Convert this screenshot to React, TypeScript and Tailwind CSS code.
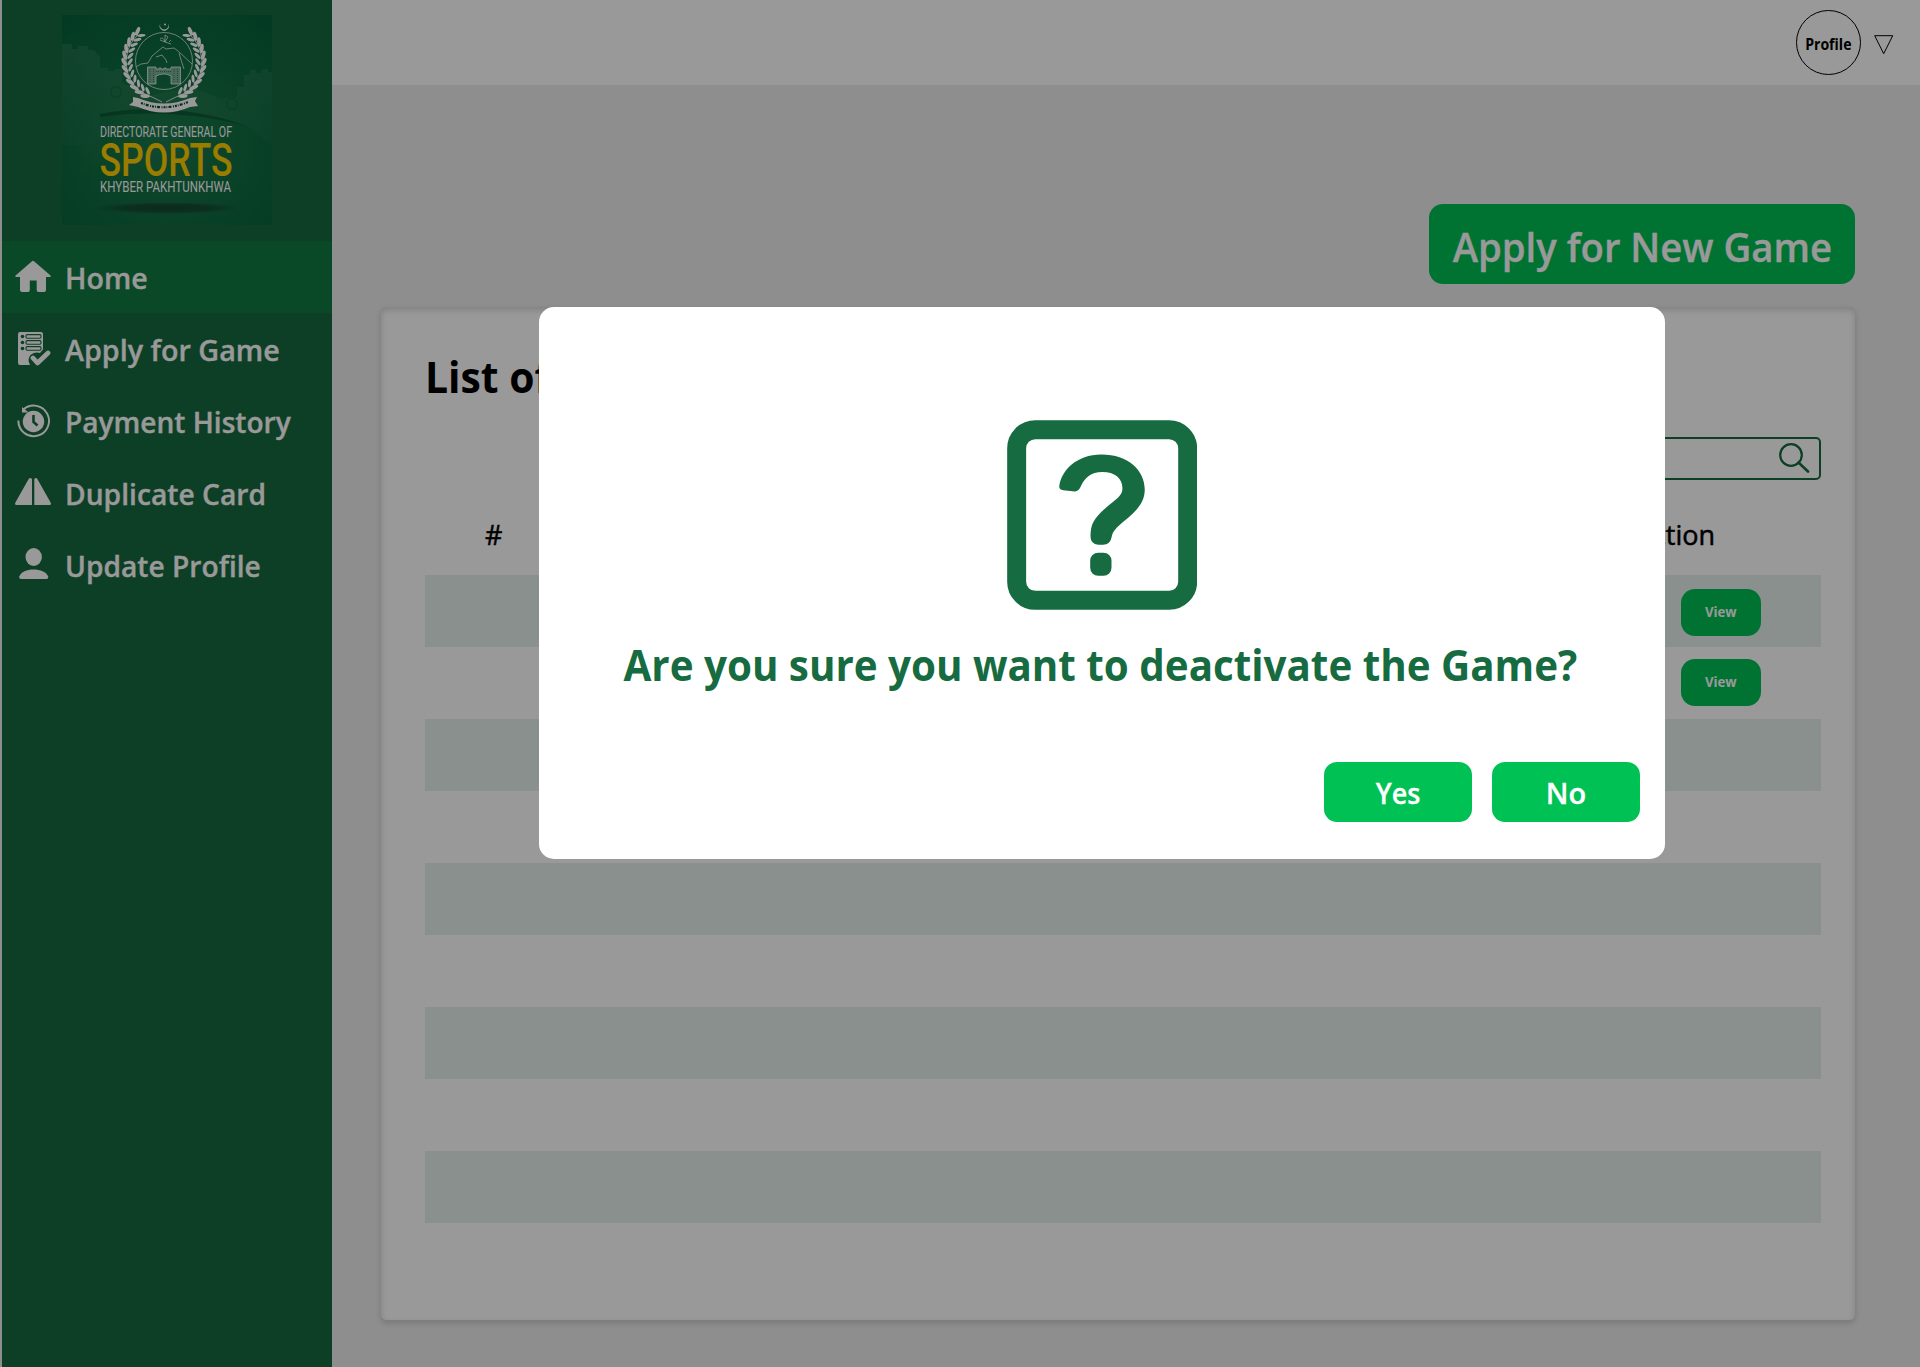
import React from "react";

const leafAngles = [-47, -37, -27, -17, -7, 3, 13, 23, 33, 43, 53, 63];

function Branch() {
  return (
    <g>
      {leafAngles.map((a) => (
        <g key={a} transform={`rotate(${a})`}>
          <ellipse cx="34" cy="-1" rx="1.500" ry="4" transform="rotate(-38 34 -1)" />
          <ellipse cx="39.800" cy="-1" rx="1.900" ry="4.700" transform="rotate(24 39.800 -1)" />
        </g>
      ))}
      <path d="M26 -26 A36.500 36.500 0 0 1 12 36 L2 41" fill="none" stroke="#fff" strokeWidth="0.8" />
    </g>
  );
}

function Logo() {
  return (
    <svg className="h-[210px] w-[210px]" viewBox="0 0 210 210">
      <defs>
        <radialGradient id="glow" cx="50%" cy="60%" r="75%">
          <stop offset="0" stopColor="#1b7a4c" />
          <stop offset="0.5" stopColor="#106e43" />
          <stop offset="1" stopColor="#04613a" />
        </radialGradient>
        <radialGradient id="shade">
          <stop offset="0" stopColor="#174230" stopOpacity="0.95" />
          <stop offset="0.6" stopColor="#174230" stopOpacity="0.7" />
          <stop offset="1" stopColor="#174230" stopOpacity="0" />
        </radialGradient>
        <linearGradient id="wall" x1="0" y1="0" x2="0" y2="1">
          <stop offset="0" stopColor="#5a9474" stopOpacity="0.28" />
          <stop offset="1" stopColor="#4f8a68" stopOpacity="0" />
        </linearGradient>
      </defs>
      <rect width="210" height="210" fill="url(#glow)" />
      <path d="M0 29 H10 V34 H16 V31 H26 V35 H32 L38 42 V53 H46 V56 H52 V54 H60 V68 L90 80 L130 72 L158 84 L175 82 V72 H182 V60 H188 V55 H194 V58 H200 V54 H206 V57 H210 V130 L185 111 Q110 85 38 99 V150 L18 165 V130 H0 Z" fill="url(#wall)" />
      <path d="M38 99 Q110 85 185 111 Q110 92 38 102 Z" fill="#0a5230" opacity="0.7" />
      <circle cx="54" cy="77" r="5.500" fill="none" stroke="#0d5732" opacity="0.6" />
      <circle cx="170" cy="89" r="5.500" fill="none" stroke="#0d5732" opacity="0.6" />
      <g fill="#fff">
        <path d="M98.500 8.500 A4.600 4.600 0 1 0 106 8.500 A4.200 4.200 0 1 1 98.500 8.500Z" />
        <circle cx="103" cy="9.500" r="1" />
        <g transform="translate(102 46)">
          <Branch />
          <g transform="scale(-1 1)">
            <Branch />
          </g>
        </g>
      </g>
      <g fill="none" stroke="#fff" strokeWidth="0.7">
        <circle cx="102" cy="46" r="28.500" />
        <path d="M74 52 L79 49 L86 48 L90 41 L101 32 L104 34 L112 33 L116 36 L130 49 M94 42 L100 40 L104 45 L105 48 M117 38 L120 48 L122 54" />
        <path d="M98 25 L103 27 L109 29 M103 27 L103 20 L106 22 L103 27 M98 24 Q101 21 103 27 M107 27 L109 25" />
      </g>
      <path d="M85.500 52 H94 V54 H97 V53 H99 V54 H102 V53 H104 V54 H109 V52 H118.500 V69 H109 V61 Q102 57 94 61 V69 H85.500Z" fill="#fff" fillOpacity="0.45" stroke="#fff" strokeWidth="0.7" />
      <path d="M94 56.500 H109 M88 54 V68 M91.500 54 V68 M112 54 V68 M115.500 54 V68" stroke="#14693f" strokeWidth="0.7" strokeDasharray="1 1" />
      <path d="M71 82 L76 83 Q102 94 128 83 L135 82 L133 86 L136 91 L128 92 Q102 103 76 92 L67 90 L71 87Z" fill="#fff" />
      <path d="M79 88 Q102 97 126 87" fill="none" stroke="#0c4a2c" strokeWidth="2.200" strokeDasharray="2 1 .8 1.200 3 1.500 1 1" />
      <g fill="#fff" fontFamily="Roboto, 'Liberation Sans', sans-serif">
        <text x="38" y="122" fontSize="14.200" textLength="132" lengthAdjust="spacingAndGlyphs">DIRECTORATE GENERAL OF</text>
        <text x="37.500" y="160.500" fontSize="46" fontWeight="500" fill="#ffcf00" textLength="133" lengthAdjust="spacingAndGlyphs">SPORTS</text>
        <text x="38" y="177" fontSize="15" textLength="131" lengthAdjust="spacingAndGlyphs">KHYBER PAKHTUNKHWA</text>
      </g>
      <ellipse cx="105" cy="193" rx="74" ry="6" fill="url(#shade)" />
    </svg>
  );
}

const HomeIcon = () => (
  <svg className="h-9 w-9" viewBox="0 0 36 36" fill="#fff">
    <path d="M17 2.200 Q18 1.300 19 2.200 L35.500 16.500 Q36.300 17.700 35 18 H31 V31 Q31 33 29 33 H23.500 Q21.700 33 21.700 31 V21.500 H14.800 V31 Q14.800 33 13 33 H7.200 Q5 33 5 31 V18 H1 Q-0.300 17.700 .6 16.500 Z" />
  </svg>
);

const ApplyIcon = () => (
  <svg className="h-9 w-9" viewBox="0 0 36 36">
    <path d="M5 1 H26 Q28 1 28 3 V18.500 L25 22 Q20 20.500 15.500 24 Q12 28 15 34 H5 Q3 34 3 32 V3 Q3 1 5 1Z" fill="#fff" />
    <g stroke="#176a40" strokeWidth="1.100" fill="#fff">
      <rect x="11" y="3.600" width="15" height="3.600" rx="1.200" />
      <rect x="11" y="9.600" width="15" height="3.600" rx="1.200" />
      <rect x="11" y="15.600" width="15" height="3.600" rx="1.200" />
    </g>
    <g fill="#176a40">
      <circle cx="7.500" cy="5.500" r="1.800" />
      <circle cx="7.500" cy="11.500" r="1.800" />
      <circle cx="7.500" cy="17.500" r="1.800" />
    </g>
    <path d="M18 26.500 L22.500 31 L33 21.500" fill="none" stroke="#176a40" strokeWidth="7" />
    <path d="M18 27 L22.500 32 L33 22" fill="none" stroke="#fff" strokeWidth="4.800" strokeLinecap="round" strokeLinejoin="round" />
  </svg>
);

const HistoryIcon = () => (
  <svg className="h-9 w-9" viewBox="0 0 36 36" fill="none">
    <circle cx="18.500" cy="18.500" r="10.700" fill="#fff" />
    <path d="M8.500 6.500 A15.300 15.300 0 1 1 3.400 17.500" stroke="#fff" strokeWidth="2" />
    <path d="M7 4 L13.500 9.500 H7Z" fill="#fff" />
    <path d="M18.500 12 V19 L22.500 22.500" stroke="#176a40" strokeWidth="2.600" />
  </svg>
);

const DuplicateIcon = () => (
  <svg className="h-9 w-9" viewBox="0 0 36 36" fill="#fff">
    <path d="M13.500 4.300 Q14.200 3 15.500 3 Q17 3 17 4.500 V30 H1 Q-.5 29.500 .4 27.500Z" />
    <path d="M22.500 4.300 Q21.800 3 20.500 3 Q19.300 3 19.300 4.500 V30 H35 Q36.500 29.500 35.600 27.500Z" />
  </svg>
);

const PersonIcon = () => (
  <svg className="h-9 w-9" viewBox="0 0 36 36" fill="#fff">
    <ellipse cx="18.700" cy="10" rx="8.200" ry="9" />
    <path d="M4.200 29.500 C6 25 12 22.500 18.500 22.500 C25 22.500 31.500 25 33.200 29.500 Q33.400 32 31.500 32 H6 Q4 32 4.200 29.500Z" />
  </svg>
);

const nav = [
  { label: "Home", icon: <HomeIcon />, active: true, scale: "scale-x-[0.985]" },
  { label: "Apply for Game", icon: <ApplyIcon />, scale: "scale-x-[0.99]" },
  { label: "Payment History", icon: <HistoryIcon />, scale: "scale-x-[0.968]" },
  { label: "Duplicate Card", icon: <DuplicateIcon />, scale: "scale-x-[0.973]" },
  { label: "Update Profile", icon: <PersonIcon />, scale: "scale-x-[0.971]" },
];

function Sidebar() {
  return (
    <aside className="ml-0.5 flex w-[330px] shrink-0 flex-col bg-[#176a40]">
      <div className="flex h-[241px] justify-center pt-[15px]">
        <Logo />
      </div>
      {nav.map((n) => (
        <div
          key={n.label}
          className={`flex h-[72px] items-center gap-[14px] pl-[13px] text-[29px] font-semibold text-white ${n.active ? "bg-[#127b43]" : ""}`}
        >
          {n.icon}
          <span className={`mt-0.5 origin-left whitespace-nowrap [-webkit-text-stroke:0.3px_#fff] ${n.scale}`}>{n.label}</span>
        </div>
      ))}
    </aside>
  );
}

const rows = [true, true, false, false, false, false, false, false, false];

function GamesCard() {
  return (
    <section className="mr-[65px] ml-[49px] mt-[23px] h-[1013px] rounded-[5px] bg-white pr-[34px] pl-[44px] shadow-[0_3px_6px_#00000029,inset_0_3px_6px_#00000029]">
      <h1 className="origin-left scale-x-[0.95] pt-[40px] text-[43px] leading-[60px] font-bold">List of Games</h1>
      <div className="mt-[30px] ml-auto flex h-[43px] w-[500px] items-center justify-end rounded-[5px] border-2 border-[#176a40] pr-[9px] pb-0.5">
        <svg className="h-8 w-8" viewBox="0 0 32 32" fill="none" stroke="#176a40">
          <circle cx="13" cy="13" r="10.800" strokeWidth="2.200" />
          <path d="M20.500 20.500 L30 29.500" strokeWidth="2.600" strokeLinecap="round" />
        </svg>
      </div>
      <div className="flex h-[95px] items-center justify-between pt-[16px] pr-[106px] pl-[60px] text-[27px] font-medium [-webkit-text-stroke:0.5px_#000]">
        <span>#</span>
        <span>Action</span>
      </div>
      {rows.map((hasView, i) => (
        <div key={i} className={`flex h-[72px] justify-end pr-[60px] ${i % 2 ? "pt-3" : "bg-[#e6f0ed] pt-3.5"}`}>
          {hasView && (
            <button className="h-[47px] w-20 rounded-[14px] bg-[#00c054] text-[14px] font-bold text-white">
              <span className="inline-block -translate-y-px scale-x-[0.94]">View</span>
            </button>
          )}
        </div>
      ))}
    </section>
  );
}

function Dialog() {
  return (
    <div className="absolute inset-0 bg-black/40 pt-[307px] pl-[539px]">
      <div className="flex h-[552px] w-[1126px] flex-col items-center rounded-[15px] bg-white pt-[112.500px]">
        <svg className="h-[190px] w-[190px]" viewBox="141 88 571 571" fill="#166b40">
          <rect x="170" y="117" width="514" height="513" rx="56" fill="none" stroke="#166b40" strokeWidth="57" />
          <path d="M298 288 C304 240 350 192 425 192 C505 192 555 240 555 297 C555 350 510 375 472 410 C460 422 456 432 455 442 Q450 463 430 463 H415 Q392 460 392 438 C392 400 402 384 440 350 C468 327 488 316 488 294 C488 262 464 244 428 244 C392 244 375 262 364 285 Q357 303 345 303 L310 299 Q298 298 298 288Z" />
          <rect x="391" y="487" width="64" height="69" rx="24" />
        </svg>
        <p className="mt-[25.500px] -ml-1 scale-x-[0.938] text-[43px] leading-[60px] font-bold whitespace-nowrap text-[#166b40]">
          Are you sure you want to deactivate the Game?
        </p>
        <div className="mt-[67px] mr-[25px] flex gap-[20.500px] self-end text-[29px] font-semibold text-white [-webkit-text-stroke:0.3px_#fff]">
          <button className="h-[60px] w-[148px] rounded-[13px] bg-[#00c254] pt-0.5">
            <span className="inline-block scale-x-[0.93]">Yes</span>
          </button>
          <button className="h-[60px] w-[148px] rounded-[13px] bg-[#00c254] pt-0.5">
            <span className="inline-block">No</span>
          </button>
        </div>
      </div>
    </div>
  );
}

export default function App() {
  return (
    <div className="relative flex h-[1367px] w-[1920px] overflow-hidden bg-[#ededed] font-['Open_Sans','Noto_Sans',sans-serif] text-black">
      <Sidebar />
      <main className="min-w-0 flex-1">
        <header className="flex h-[85px] items-center justify-end bg-white pr-[26px]">
          <div className="flex h-[65px] w-[65px] items-center justify-center rounded-full border border-black pt-[3px]">
            <span className="-ml-px scale-x-[0.88] text-[16px] font-bold">Profile</span>
          </div>
          <svg className="mt-[5px] ml-[13px] h-5 w-5" viewBox="0 0 20 20" fill="none" stroke="#000">
            <path d="M.7 .7 H18.700 L9.700 18.700Z" />
          </svg>
        </header>
        <div className="flex justify-end pt-[119px] pr-[65px]">
          <button className="h-20 w-[426px] rounded-[14px] bg-[#00c054] pt-1.5 text-[39px] font-semibold whitespace-nowrap text-white [-webkit-text-stroke:0.3px_#fff]">
            <span className="inline-block scale-x-[0.981]">Apply for New Game</span>
          </button>
        </div>
        <GamesCard />
      </main>
      <Dialog />
    </div>
  );
}
